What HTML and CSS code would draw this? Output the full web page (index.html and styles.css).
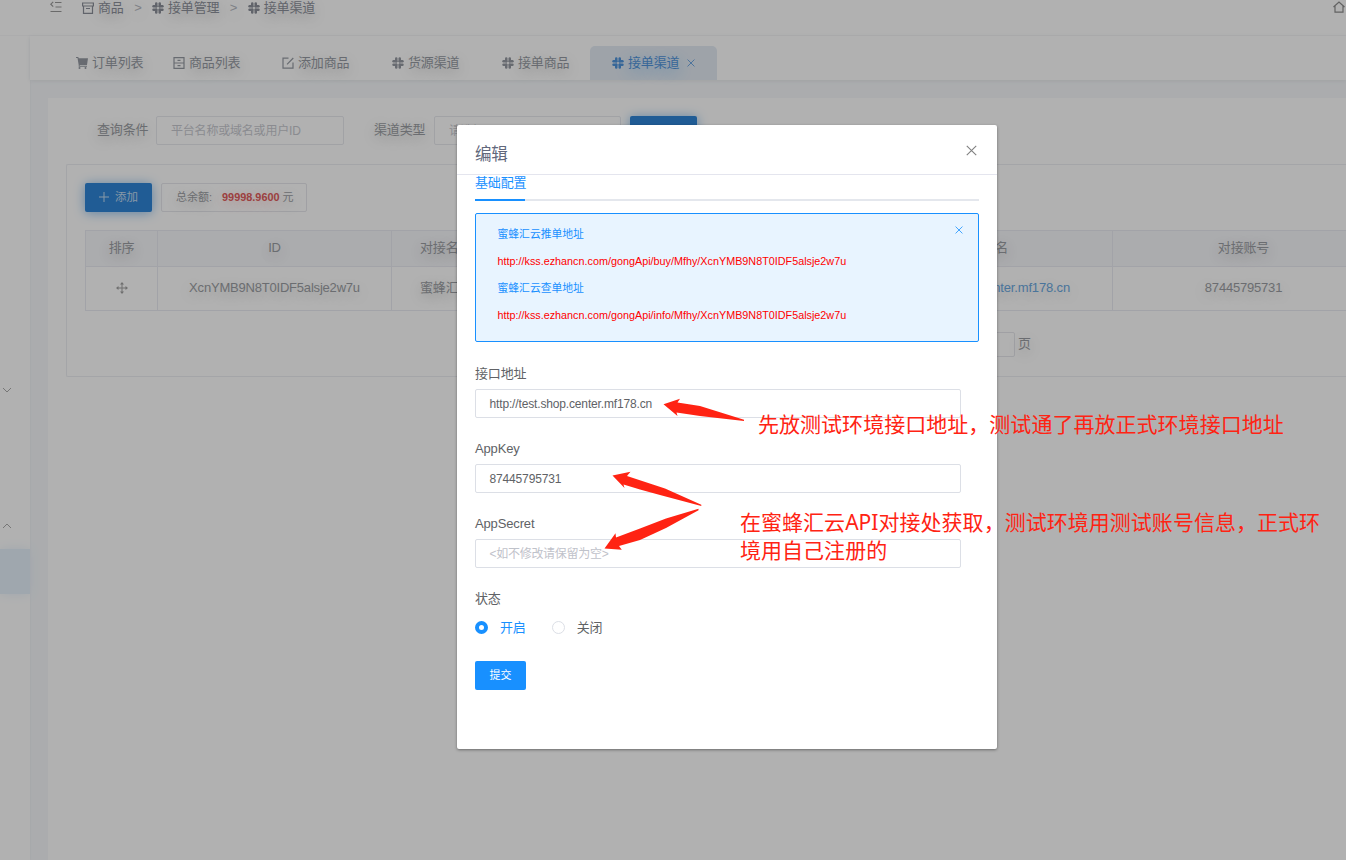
FILE: index.html
```html
<!DOCTYPE html>
<html lang="zh-CN">
<head>
<meta charset="utf-8">
<title>接单渠道</title>
<link rel="stylesheet" href="styles.css">
</head>
<body>
<svg class="defs" aria-hidden="true">
  <symbol id="slack" viewBox="0 0 12 12">
    <g fill="currentColor">
      <rect x="3" y=".3" width="2.500" height="5.200" rx="1.200"/><rect x="6.500" y=".3" width="2.500" height="5.200" rx="1.200"/>
      <rect x="3" y="6.500" width="2.500" height="5.200" rx="1.200"/><rect x="6.500" y="6.500" width="2.500" height="5.200" rx="1.200"/>
      <rect x=".3" y="3" width="5.200" height="2.500" rx="1.200"/><rect x="6.500" y="3" width="5.200" height="2.500" rx="1.200"/>
      <rect x=".3" y="6.500" width="5.200" height="2.500" rx="1.200"/><rect x="6.500" y="6.500" width="5.200" height="2.500" rx="1.200"/>
    </g>
  </symbol>
  <symbol id="close" viewBox="0 0 10 10"><path d="M.7.7l8.600 8.600M9.300.7L.7 9.300" fill="none" stroke="currentColor" stroke-width="1"/></symbol>
</svg>
<div class="page">
  <aside class="sidebar">
    <div class="brand"></div>
    <svg class="arrow down" viewBox="0 0 10 6"><path d="M1 1l4 4 4-4"/></svg>
    <svg class="arrow up" viewBox="0 0 10 6"><path d="M1 5l4-4 4 4"/></svg>
    <div class="side-active"></div>
  </aside>
  <main class="main">
    <header class="topbar">
      <svg class="fold" viewBox="0 0 12 12"><path d="M5 1.500h6.500M5.500 6H11.500M.5 10.500h11M3.200.8L.8 3.200l2.400 2.400"/></svg>
      <nav class="crumbs">
        <span class="crumb"><svg class="line-icon" viewBox="0 0 12 12"><path d="M.6 1h10.800v3H.6zM1.500 4v7.300h9V4M4 6.500h4"/></svg>商品</span>
        <span class="sep">&gt;</span>
        <span class="crumb"><svg class="icon"><use href="#slack"/></svg>接单管理</span>
        <span class="sep">&gt;</span>
        <span class="crumb"><svg class="icon"><use href="#slack"/></svg>接单渠道</span>
      </nav>
      <svg class="home" viewBox="0 0 12 12"><path d="M.5 6L6 1l5.500 5M2 5v6.200h8V5"/></svg>
    </header>
    <nav class="tabs">
      <span class="tab t1"><svg class="icon" viewBox="0 0 12 12"><path fill="currentColor" d="M0 0h2.300l.4 1.300H12L11 8H3.700v.8H11v1H2.700V8L1.500 1H0z"/><circle cx="3.500" cy="11" r="1" fill="currentColor"/><circle cx="9.500" cy="11" r="1" fill="currentColor"/></svg>订单列表</span>
      <span class="tab t2"><svg class="line-icon" viewBox="0 0 12 12"><path d="M1 .6h10v10.800H1zM1 6h10M4.500 3.300h3M4.500 8.700h3"/></svg>商品列表</span>
      <span class="tab t3"><svg class="line-icon" viewBox="0 0 12 12"><path d="M6.500 1.200H1v10h10V5.500M5 7.300L11.300 1"/></svg>添加商品</span>
      <span class="tab t4"><svg class="icon"><use href="#slack"/></svg>货源渠道</span>
      <span class="tab t5"><svg class="icon"><use href="#slack"/></svg>接单商品</span>
      <span class="tab active"><svg class="icon"><use href="#slack"/></svg>接单渠道<svg class="tab-x"><use href="#close"/></svg></span>
    </nav>
    <section class="panel">
      <div class="filters">
        <label>查询条件</label><div class="field f1">平台名称或域名或用户ID</div>
        <label class="l2">渠道类型</label><div class="field f2">请选择</div>
        <button class="btn search"></button>
      </div>
      <div class="card">
        <div class="tools">
          <button class="btn"><svg class="plus" viewBox="0 0 10 10"><path d="M5 0v10M0 5h10"/></svg>添加</button>
          <div class="balance">总余额:<b>99998.9600</b>元</div>
        </div>
        <div class="table">
          <div class="row head"><span>排序</span><span>ID</span><span>对接名称</span><span>对接域名</span><span>对接账号</span></div>
          <div class="row"><span><svg class="move" viewBox="0 0 12 12"><path d="M6 1v10M1 6h10"/><path class="tips" d="M6 0l2 2.500H4zM6 12l2-2.500H4zM0 6l2.500-2v4zM12 6L9.500 4v4z"/></svg></span><span class="latin">XcnYMB9N8T0IDF5alsje2w7u</span><span>蜜蜂汇云</span><span class="link">http://test.shop.center.mf178.cn</span><span class="latin">87445795731</span></div>
        </div>
        <div class="pager"><i></i>页</div>
      </div>
    </section>
  </main>
</div>
<div class="mask"></div>

<div class="modal">
  <div class="modal-head">编辑<svg><use href="#close"/></svg></div>
  <div class="modal-body">
    <div class="form-tabs"><span>基础配置</span></div>
    <div class="alert">
      <svg><use href="#close"/></svg>
      <p>蜜蜂汇云推单地址</p><p class="url">http://kss.ezhancn.com/gongApi/buy/Mfhy/XcnYMB9N8T0IDF5alsje2w7u</p>
      <p>蜜蜂汇云查单地址</p><p class="url">http://kss.ezhancn.com/gongApi/info/Mfhy/XcnYMB9N8T0IDF5alsje2w7u</p>
    </div>
    <div class="item"><label>接口地址</label><div class="input">http://test.shop.center.mf178.cn</div></div>
    <div class="item"><label>AppKey</label><div class="input">87445795731</div></div>
    <div class="item"><label>AppSecret</label><div class="input hint">&lt;如不修改请保留为空&gt;</div></div>
    <div class="item status"><label>状态</label>
      <div class="radios"><span class="radio on"><i></i>开启</span><span class="radio"><i></i>关闭</span></div>
    </div>
    <button class="submit">提交</button>
  </div>
</div>

<svg class="marks" viewBox="0 0 1346 860">
  <path d="M663.500 404.300L680 398.800 677.500 402.500 700 406 744 419.800V421L700 416 676.500 412.500 677.500 416z"/>
  <path d="M612.500 475.500L630.500 471.800 627 476 665 488.500 701.300 504.800V506L660 495 640 489.500 623.500 484.500 624.500 488z"/>
  <path d="M604.500 548.500L615.500 533.200 616 537.500 640 528.500 666 518.500 698.500 508.800V510.200L666 528 640 540 619 546 621.800 549.800z"/>
</svg>
<div class="note note-a">先放测试环境接口地址，测试通了再放正式环境接口地址</div>
<div class="note note-b">在蜜蜂汇云API对接处获取，测试环境用测试账号信息，正式环<br>境用自己注册的</div>
</body>
</html>
```
FILE: styles.css
```css
* { box-sizing: border-box; }
body {
  margin: 0;
  width: 1346px;
  height: 860px;
  position: relative;
  overflow: hidden;
  font: 13px/20px "Liberation Sans", "Noto Sans CJK SC", sans-serif;
  letter-spacing: -.15px;
  color: #606266;
}
button { border: 0; padding: 0; font: inherit; }
.defs { position: absolute; width: 0; height: 0; }
.page { display: flex; height: 860px; background: #f5f7fa; color: #9a9da2; }
.mask { position: absolute; inset: 0; background: rgba(0, 0, 0, .3); }

.sidebar { width: 30px; flex: none; background: #fefefe; display: flex; flex-direction: column; box-shadow: 0 0 2px #e6e8ec; }
.brand { height: 36px; flex: none; border-bottom: 1px solid #f6f6f8; }
.sidebar .arrow { width: 10px; height: 6px; margin-left: 2px; fill: none; stroke: #aaa; }
.sidebar .down { margin-top: 351px; }
.sidebar .up { margin-top: 130px; }
.side-active { height: 45px; margin-top: 20px; background: #e4effa; box-shadow: 0 0 12px #e6f0fa; }

.main { flex: 1; min-width: 0; display: flex; flex-direction: column; text-shadow: 0 4px 14px rgba(0, 0, 0, .24); }
.icon, .line-icon { width: 12px; height: 12px; flex: none; }
.line-icon { fill: none; stroke: currentColor; stroke-width: 1.2; }
.topbar { height: 36px; flex: none; background: #fefefe; border-bottom: 1px solid #f6f6f8; display: flex; align-items: flex-start; color: #8c909a; }
.fold { width: 12px; height: 12px; margin: 1px 0 0 20px; fill: none; stroke: #999; stroke-width: 1.2; }
.crumbs { display: flex; margin: -2px 0 0 20px; }
.crumb { display: flex; align-items: center; gap: 4px; }
.sep { width: 28.300px; text-align: center; color: #b5b8c0; }
.home { width: 12px; height: 12px; margin: 1px 1px 0 auto; fill: none; stroke: #8c8c8c; stroke-width: 1.2; }

.tabs { height: 44px; flex: none; background: #fefefe; display: flex; align-items: flex-end; padding-left: 47px; box-shadow: 0 1px 4px #e4e7ea; color: #959aa2; }
.tab { display: flex; align-items: center; gap: 4px; height: 34px; }
.t1 { width: 97px; margin-left: -1px; }
.t2 { width: 109px; }
.t3, .t4 { width: 110px; }
.t5 { width: 89px; }
.tab.active { width: 127px; padding-left: 22px; margin-left: -1px; color: #5094da; background: #e2eaf3; border-radius: 5px 5px 0 0; text-shadow: 0 4px 14px #1890ff66; }
.tab-x { width: 8px; height: 8px; margin-left: 4px; }

.panel { flex: 1; margin: 18px 0 0 18px; padding: 18px 0 0 18px; background: #fefefe; }
.filters { display: flex; height: 29px; padding-left: 31px; }
.filters label { width: 59px; line-height: 27px; }
.field { height: 29px; border: 1px solid #e7e8ed; border-radius: 2px; padding-left: 14px; line-height: 28px; font-size: 12px; color: #c6c8ce; text-shadow: none; letter-spacing: -.2px; }
.f1 { width: 188px; }
.f2 { width: 187px; }
.filters .l2 { margin-left: 30px; width: 60px; }
.btn { width: 67px; height: 29px; border-radius: 2px; background: #2f85d6; color: #c3daef; font-size: 11.500px; padding-bottom: 1px; display: flex; align-items: center; justify-content: center; box-shadow: 0 1px 12px #8abdec; text-shadow: none; }
.search { margin-left: 9px; }
.card { height: 213px; margin-top: 19px; padding: 18px; border: 1px solid #ebecf1; border-right: 0; border-radius: 2px 0 0 2px; }
.plus { width: 10px; height: 10px; margin-right: 6px; fill: none; stroke: currentColor; }
.tools { display: flex; gap: 9px; }
.balance { width: 146px; height: 29px; border: 1px solid #e5e6eb; border-radius: 2px; padding-left: 14px; font-size: 11px; line-height: 27px; letter-spacing: 0; }
.balance b { color: #e05c5c; margin: 0 3px 0 10px; font-size: 10.900px; text-shadow: 0 3px 12px #f886; }
.table { margin-top: 18px; border-top: 1px solid #e9eaf1; border-left: 1px solid #e9eaf1; margin-right: -18px; width: 1263px; }
.row { display: grid; grid-template-columns: 72px 234px 110px 611px 262px; height: 44px; }
.row span { display: flex; justify-content: center; align-items: center; border-right: 1px solid #e9eaf1; border-bottom: 1px solid #e9eaf1; padding-bottom: 2px; }
.row.head { height: 36px; background: #f5f6f9; }
.row .latin { letter-spacing: -.2px; }
.row span:nth-child(3) { justify-content: flex-start; padding-left: 28px; }
.row span:nth-child(4) { justify-content: flex-end; padding-right: 42px; }
.row.head span:nth-child(4) { padding-right: 104px; }
.row .link { color: #6aa7de; }
.move { width: 12px; height: 12px; fill: none; stroke: #a0a0a0; }
.move .tips { fill: #a0a0a0; stroke: none; }
.pager { display: flex; align-items: flex-start; margin: 21px 0 0 883px; gap: 3px; line-height: 23px; }
.pager i { width: 47px; height: 25px; border: 1px solid #e5e6eb; border-radius: 2px; }

.modal { position: absolute; left: 457px; top: 125px; width: 540px; height: 624px; background: #fff; border-radius: 2px; box-shadow: 0 1px 3px rgba(0, 0, 0, .4); }
.modal-head { height: 50px; padding: 8px 20px 0 18px; border-bottom: 1px solid #e4e5ee; display: flex; justify-content: space-between; align-items: center; font-size: 16.500px; color: #61687c; }
.modal-head svg { width: 11px; height: 11px; margin-top: -6px; color: #808080; }
.modal-body { padding: 0 18px; }
.form-tabs { height: 26px; border-bottom: 2px solid #e4e7ed; color: #1890ff; line-height: 15px; }
.form-tabs span { display: block; width: 50px; height: 26px; white-space: nowrap; border-bottom: 2px solid #1890ff; }
.alert { position: relative; height: 129px; margin-top: 12px; padding: 7px 21.500px; border: 1px solid #1890ff; border-radius: 2px; background: #e8f4ff; color: #1890ff; font-size: 10.800px; letter-spacing: 0; }
.alert p { margin: 0; line-height: 27px; }
.alert .url { color: #f00; }
.alert svg { position: absolute; right: 15px; top: 12px; width: 8px; height: 8px; }
.item { height: 75px; }
.alert + .item { margin-top: 18px; }
.item label { display: block; height: 29px; line-height: 27px; }
.input { width: 486px; height: 29px; border: 1px solid #dcdfe6; border-radius: 2px; padding-left: 13.500px; line-height: 28px; font-size: 12px; }
.hint { color: #bfc2ca; letter-spacing: -.28px; }
.item.status { height: 76px; }
.radios { display: flex; gap: 26px; }
.radio { display: flex; align-items: center; gap: 12px; height: 27px; }
.radio i { width: 13px; height: 13px; border: 1px solid #dcdfe6; border-radius: 50%; }
.radio.on { color: #1890ff; }
.radio.on i { border: 4.500px solid #1890ff; background: #fff; }
.submit { display: block; width: 51px; height: 29px; padding-bottom: 1px; border-radius: 2px; background: #1890ff; color: #fff; font-size: 11px; letter-spacing: 0; }

.marks { position: absolute; left: 0; top: 0; width: 1346px; height: 860px; fill: #ff2313; }
.note { position: absolute; color: #ff2313; font: 21px/28px "Noto Sans", "Noto Sans CJK SC", sans-serif; letter-spacing: .03px; white-space: nowrap; }
.note-a { left: 758px; top: 410px; }
.note-b { left: 740px; top: 508px; }
```
